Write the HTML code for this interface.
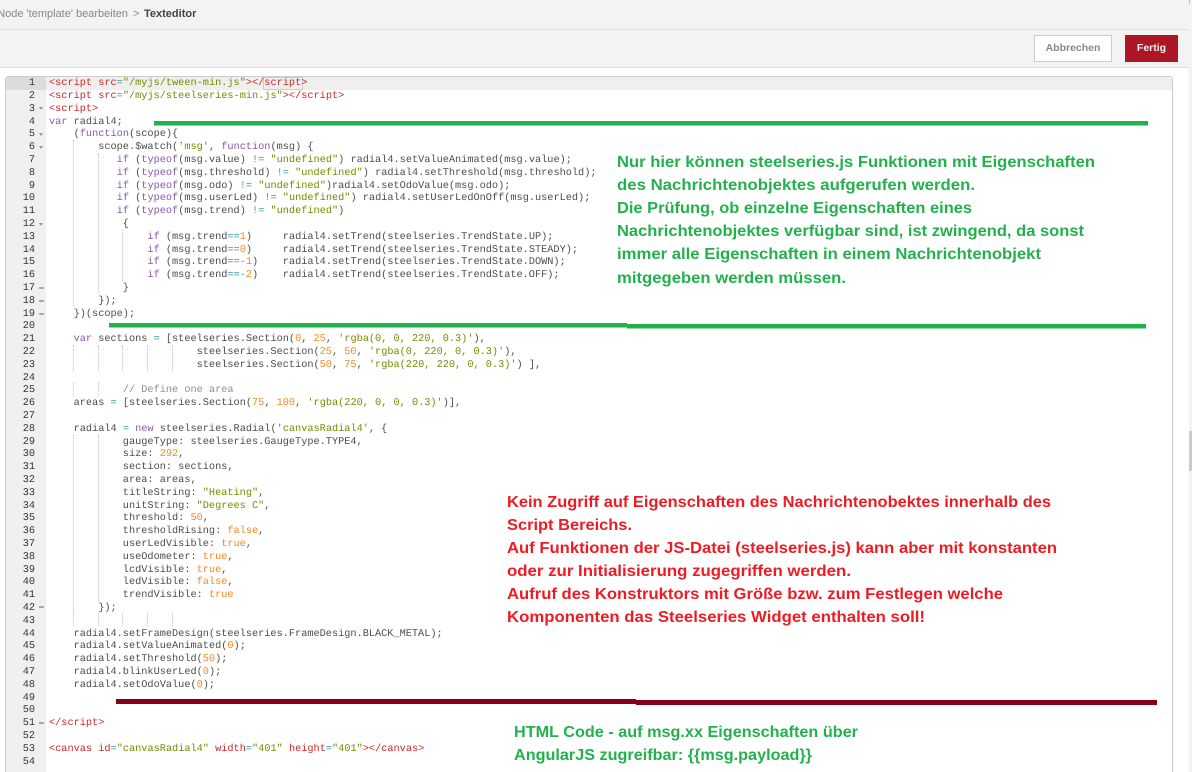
<!DOCTYPE html>
<html><head><meta charset="utf-8"><style>
html,body{margin:0;padding:0;width:1192px;height:772px;overflow:hidden;background:#fff;font-family:"Liberation Sans",sans-serif}
.a{position:absolute}
#code{position:absolute;left:49px;top:77.3px;margin:0;font:10.25px/12.8px "Liberation Mono",monospace;color:#4d4d4c;white-space:pre;text-rendering:geometricPrecision;-webkit-font-smoothing:auto}
#nums{position:absolute;left:6px;width:29px;top:77.3px;text-align:right;font:10.25px/12.8px "Liberation Mono",monospace;color:#333;white-space:pre;text-rendering:geometricPrecision}
.t{color:#c82829}.k{color:#8959a8}.s{color:#718c00}.n{color:#f5871f}.o{color:#3e999f}.c{color:#8e908c}
.g{position:absolute;width:0;border-left:1px dotted #c4c4c4}
.f{position:absolute;left:39px;width:0;height:0;border-left:2.5px solid transparent;border-right:2.5px solid transparent;border-top:3px solid #999}
.f2{position:absolute;left:39px;width:5px;height:2px;background:#aaa}
svg text{font-family:"Liberation Sans",sans-serif;font-weight:bold;font-size:16px}
</style></head><body>
<div class="a" style="left:0;top:0;width:1192px;height:29px;background:#f3f3f3;border-bottom:1px solid #ddd;box-sizing:content-box"></div>
<div class="a" style="left:0;top:30px;width:1192px;height:37px;background:#f3f3f3;border-bottom:1px solid #ddd"></div>
<div class="a" style="right:1064px;top:8px;font-size:11px;line-height:13px;color:#888;white-space:nowrap">Node 'template' bearbeiten</div>
<div class="a" style="left:133px;top:8px;font-size:11px;line-height:13px;color:#888">&gt;</div>
<div class="a" style="left:144px;top:8px;font-size:11px;line-height:13px;font-weight:bold;color:#444">Texteditor</div>
<div class="a" style="left:1034px;top:35px;width:78px;height:27px;box-sizing:border-box;background:#fff;border:1px solid #ccc;color:#888;font-size:10.5px;font-weight:bold;line-height:25px;text-align:center">Abbrechen</div>
<div class="a" style="left:1125px;top:35px;width:53px;height:27px;background:#ad1625;color:#eee;font-size:10.5px;font-weight:bold;line-height:27px;text-align:center">Fertig</div>

<div class="a" style="left:5px;top:76px;width:1168px;height:696px;box-sizing:border-box;border:1px solid #ccc;border-bottom:none;border-radius:3px 3px 0 0;background:#fff"></div>
<div class="a" style="left:6px;top:77px;width:40px;height:695px;background:#f0f0f0"></div>
<div class="a" style="left:6px;top:77px;width:40px;height:13px;background:#dcdcdc"></div>
<div class="a" style="left:46px;top:77px;width:1126px;height:13px;background:#efefef"></div>
<div class="a" style="left:263px;top:77px;width:38px;height:11px;border:1px solid #ccc"></div>

<div class="g" style="left:73px;top:140px;height:166px"></div>
<div class="g" style="left:98px;top:153px;height:140px"></div>
<div class="g" style="left:122px;top:230px;height:51px"></div>
<div class="g" style="left:73px;top:345px;height:26px"></div>
<div class="g" style="left:98px;top:345px;height:26px"></div>
<div class="g" style="left:122px;top:345px;height:26px"></div>
<div class="g" style="left:147px;top:345px;height:26px"></div>
<div class="g" style="left:172px;top:345px;height:26px"></div>
<div class="g" style="left:73px;top:383px;height:13px"></div>
<div class="g" style="left:98px;top:383px;height:13px"></div>
<div class="g" style="left:73px;top:435px;height:178px"></div>
<div class="g" style="left:98px;top:435px;height:166px"></div>
<div class="g" style="left:73px;top:613px;height:13px"></div>
<div class="g" style="left:98px;top:613px;height:13px"></div>
<div class="g" style="left:122px;top:613px;height:13px"></div>
<div class="g" style="left:147px;top:613px;height:13px"></div>
<div class="g" style="left:172px;top:613px;height:13px"></div>

<div id="nums">1
2
3
4
5
6
7
8
9
10
11
12
13
14
15
16
17
18
19
20
21
22
23
24
25
26
27
28
29
30
31
32
33
34
35
36
37
38
39
40
41
42
43
44
45
46
47
48
49
50
51
52
53
54</div>
<div class="f" style="top:107px"></div>
<div class="f" style="top:133px"></div>
<div class="f" style="top:146px"></div>
<div class="f" style="top:223px"></div>
<div class="f2" style="top:287px"></div>
<div class="f2" style="top:300px"></div>
<div class="f2" style="top:313px"></div>
<div class="f2" style="top:606px"></div>
<div class="f2" style="top:722px"></div>

<pre id="code"><span class="t">&lt;script</span> <span class="t">src</span><span class="o">=</span><span class="s">"/myjs/tween-min.js"</span><span class="t">&gt;&lt;/script&gt;</span>
<span class="t">&lt;script</span> <span class="t">src</span><span class="o">=</span><span class="s">"/myjs/steelseries-min.js"</span><span class="t">&gt;&lt;/script&gt;</span>
<span class="t">&lt;script&gt;</span>
<span class="k">var</span> radial4;
    (<span class="k">function</span>(scope){
        scope.$watch(<span class="s">'msg'</span>, <span class="k">function</span>(msg) {
           <span class="k">if</span> (<span class="k">typeof</span>(msg.value) <span class="o">!=</span> <span class="s">"undefined"</span>) radial4.setValueAnimated(msg.value);
           <span class="k">if</span> (<span class="k">typeof</span>(msg.threshold) <span class="o">!=</span> <span class="s">"undefined"</span>) radial4.setThreshold(msg.threshold);
           <span class="k">if</span> (<span class="k">typeof</span>(msg.odo) <span class="o">!=</span> <span class="s">"undefined"</span>)radial4.setOdoValue(msg.odo);
           <span class="k">if</span> (<span class="k">typeof</span>(msg.userLed) <span class="o">!=</span> <span class="s">"undefined"</span>) radial4.setUserLedOnOff(msg.userLed);
           <span class="k">if</span> (<span class="k">typeof</span>(msg.trend) <span class="o">!=</span> <span class="s">"undefined"</span>)
            {
                <span class="k">if</span> (msg.trend<span class="o">==</span><span class="n">1</span>)     radial4.setTrend(steelseries.TrendState.UP);
                <span class="k">if</span> (msg.trend<span class="o">==</span><span class="n">0</span>)     radial4.setTrend(steelseries.TrendState.STEADY);
                <span class="k">if</span> (msg.trend<span class="o">==-</span><span class="n">1</span>)    radial4.setTrend(steelseries.TrendState.DOWN);
                <span class="k">if</span> (msg.trend<span class="o">==-</span><span class="n">2</span>)    radial4.setTrend(steelseries.TrendState.OFF);
            }
        });
    })(scope);

    <span class="k">var</span> sections <span class="o">=</span> [steelseries.Section(<span class="n">0</span>, <span class="n">25</span>, <span class="s">'rgba(0, 0, 220, 0.3)'</span>),
                        steelseries.Section(<span class="n">25</span>, <span class="n">50</span>, <span class="s">'rgba(0, 220, 0, 0.3)'</span>),
                        steelseries.Section(<span class="n">50</span>, <span class="n">75</span>, <span class="s">'rgba(220, 220, 0, 0.3)'</span>) ],

            <span class="c">// Define one area</span>
    areas <span class="o">=</span> [steelseries.Section(<span class="n">75</span>, <span class="n">100</span>, <span class="s">'rgba(220, 0, 0, 0.3)'</span>)],

    radial4 <span class="o">=</span> <span class="k">new</span> steelseries.Radial(<span class="s">'canvasRadial4'</span>, {
            gaugeType: steelseries.GaugeType.TYPE4,
            size: <span class="n">292</span>,
            section: sections,
            area: areas,
            titleString: <span class="s">"Heating"</span>,
            unitString: <span class="s">"Degrees C"</span>,
            threshold: <span class="n">50</span>,
            thresholdRising: <span class="n">false</span>,
            userLedVisible: <span class="n">true</span>,
            useOdometer: <span class="n">true</span>,
            lcdVisible: <span class="n">true</span>,
            ledVisible: <span class="n">false</span>,
            trendVisible: <span class="n">true</span>
        });

    radial4.setFrameDesign(steelseries.FrameDesign.BLACK_METAL);
    radial4.setValueAnimated(<span class="n">0</span>);
    radial4.setThreshold(<span class="n">50</span>);
    radial4.blinkUserLed(<span class="n">0</span>);
    radial4.setOdoValue(<span class="n">0</span>);


<span class="t">&lt;/script&gt;</span>

<span class="t">&lt;canvas</span> <span class="t">id</span><span class="o">=</span><span class="s">"canvasRadial4"</span> <span class="t">width</span><span class="o">=</span><span class="s">"401"</span> <span class="t">height</span><span class="o">=</span><span class="s">"401"</span><span class="t">&gt;&lt;/canvas&gt;</span>
</pre>

<div class="a" style="left:1189px;top:0;width:3px;height:772px;background:#f3f3f3"></div>
<div class="a" style="left:1189px;top:431px;width:3px;height:40px;background:#ccc"></div>
<div class="a" style="left:1189px;top:0;width:1px;height:4px;background:#bbb"></div>

<svg class="a" style="left:0;top:0;display:block" width="1192" height="772" xmlns="http://www.w3.org/2000/svg">
<rect x="154" y="121" width="994" height="4.5" fill="#22b14c"/>
<rect x="109" y="323" width="518" height="4.5" fill="#22b14c"/>
<rect x="627" y="324" width="519" height="4.5" fill="#22b14c"/>
<rect x="116" y="699" width="520" height="5" fill="#880015"/>
<rect x="636" y="700" width="521" height="5" fill="#880015"/>
<g fill="#22b14c">
<text x="617" y="167" textLength="478" lengthAdjust="spacingAndGlyphs">Nur hier können steelseries.js Funktionen mit Eigenschaften</text>
<text x="617" y="190" textLength="358" lengthAdjust="spacingAndGlyphs">des Nachrichtenobjektes aufgerufen werden.</text>
<text x="617" y="213" textLength="355" lengthAdjust="spacingAndGlyphs">Die Prüfung, ob einzelne Eigenschaften eines</text>
<text x="617" y="236" textLength="467" lengthAdjust="spacingAndGlyphs">Nachrichtenobjektes verfügbar sind, ist zwingend, da sonst</text>
<text x="617" y="259" textLength="424" lengthAdjust="spacingAndGlyphs">immer alle Eigenschaften in einem Nachrichtenobjekt</text>
<text x="617" y="283" textLength="229" lengthAdjust="spacingAndGlyphs">mitgegeben werden müssen.</text>
<text x="514" y="737" textLength="344" lengthAdjust="spacingAndGlyphs">HTML Code - auf msg.xx Eigenschaften über</text>
<text x="514" y="760" textLength="298" lengthAdjust="spacingAndGlyphs">AngularJS zugreifbar: {{msg.payload}}</text>
</g>
<g fill="#ed1c24">
<text x="507" y="507" textLength="544" lengthAdjust="spacingAndGlyphs">Kein Zugriff auf Eigenschaften des Nachrichtenobektes innerhalb des</text>
<text x="507" y="530" textLength="125" lengthAdjust="spacingAndGlyphs">Script Bereichs.</text>
<text x="507" y="553" textLength="550" lengthAdjust="spacingAndGlyphs">Auf Funktionen der JS-Datei (steelseries.js) kann aber mit konstanten</text>
<text x="507" y="576" textLength="344" lengthAdjust="spacingAndGlyphs">oder zur Initialisierung zugegriffen werden.</text>
<text x="507" y="599" textLength="496" lengthAdjust="spacingAndGlyphs">Aufruf des Konstruktors mit Größe bzw. zum Festlegen welche</text>
<text x="507" y="622" textLength="418" lengthAdjust="spacingAndGlyphs">Komponenten das Steelseries Widget enthalten soll!</text>
</g>
</svg>
</body></html>
